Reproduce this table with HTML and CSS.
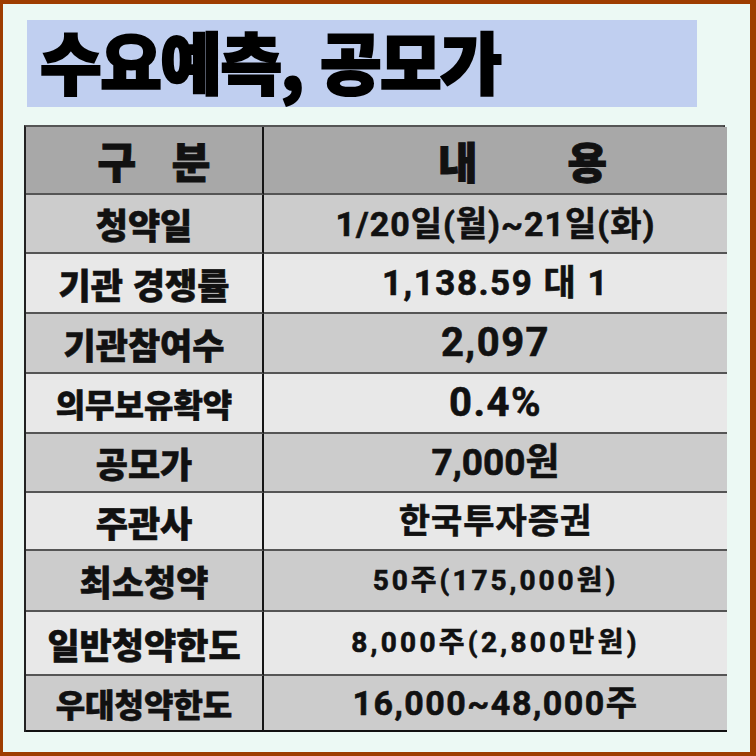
FILE: index.html
```html
<!DOCTYPE html>
<html lang="ko">
<head>
<meta charset="utf-8">
<link rel="stylesheet" href="styles.css">
</head>
<body>
<div class="frame">
  <div class="title"><h1>수요예측, 공모가</h1></div>
  <div class="grid">
    <div class="cell head k h1">구 분</div>
    <div class="cell head v h2">내<span class="gap"></span>용</div>

    <div class="cell dark k">청약일</div>
    <div class="cell dark v s-date">1/20일(월)~21일(화)</div>

    <div class="cell light k">기관 경쟁률</div>
    <div class="cell light v s-ratio">1,138.59 대 1</div>

    <div class="cell dark k">기관참여수</div>
    <div class="cell dark v s-big">2,097</div>

    <div class="cell light k small">의무보유확약</div>
    <div class="cell light v s-big">0.4%</div>

    <div class="cell dark k">공모가</div>
    <div class="cell dark v s-price">7,000원</div>

    <div class="cell light k">주관사</div>
    <div class="cell light v s-mid">한국투자증권</div>

    <div class="cell dark k">최소청약</div>
    <div class="cell dark v s-small">50주(175,000원)</div>

    <div class="cell light k">일반청약한도</div>
    <div class="cell light v s-small wide">8,000주(2,800만원)</div>

    <div class="cell dark k small last">우대청약한도</div>
    <div class="cell dark v s-range last">16,000~48,000주</div>
  </div>
</div>
</body>
</html>
```
FILE: styles.css
```css
html, body {
  margin: 0;
  padding: 0;
}
body {
  width: 756px;
  height: 756px;
  background: #9e3d00;
  font-family: Roboto, "Noto Sans CJK KR", sans-serif;
  color: #111;
}
.frame {
  box-sizing: border-box;
  width: 756px;
  height: 756px;
  border-style: solid;
  border-color: #9e3d00;
  border-width: 4px 6px 4px 3px;
  background: #ecf9f4;
  padding: 16px 0 0 24px;
}
.title {
  width: 670px;
  height: 87px;
  background: #c0cff0;
  display: flex;
  align-items: center;
}
.title h1 {
  margin: -9px 0 0 13px;
  font-family: "Noto Sans CJK KR", sans-serif;
  font-weight: 900;
  font-size: 67px;
  line-height: 1;
  letter-spacing: -1.5px;
  -webkit-text-stroke: 2.2px #000;
  color: #000;
}
.grid {
  margin: 18px 0 0 -3px;
  width: 701px;
  display: grid;
  grid-template-columns: 238px 463px;
  grid-template-rows: 68px 59px 60px 60px 60px 59px 58px 61px 64px 56px;
  border-top: 2px solid #555;
  border-left: 2px solid #222;
  border-right: 2px solid #333;
  box-sizing: border-box;
}
.cell {
  box-sizing: border-box;
  display: flex;
  align-items: center;
  justify-content: center;
  border-bottom: 2px solid #555;
  font-weight: 700;
  line-height: 1;
  white-space: nowrap;
  -webkit-text-stroke: 0.6px #111;
}
.cell.last {
  border-bottom-color: #111;
}
.k {
  border-right: 2px solid #151515;
  font-size: 35px;
  font-weight: 900;
  font-family: "Noto Sans CJK KR", sans-serif;
}
.k.small {
  font-size: 32px;
}
.head {
  background: #a8a8a8;
}
.dark {
  background: #cccccc;
}
.light {
  background: #e8e8e8;
}
.v {
  font-size: 32px;
}
.head.h1 {
  font-size: 42px;
  letter-spacing: 12px;
  padding-left: 32px;
  -webkit-text-stroke: 1px #111;
}
.head.h2 {
  font-size: 43px;
  font-weight: 900;
  font-family: "Noto Sans CJK KR", sans-serif;
  padding-left: 54px;
  -webkit-text-stroke: 1px #111;
}
.gap {
  display: inline-block;
  width: 90px;
}
.s-date {
  font-size: 34px;
  letter-spacing: 1px;
}
.s-ratio {
  font-size: 35px;
  letter-spacing: 1.5px;
}
.s-big {
  font-size: 40px;
  letter-spacing: 1.5px;
}
.s-price {
  font-size: 37px;
}
.s-mid {
  font-size: 34px;
  letter-spacing: 1px;
}
.s-small {
  font-size: 28px;
  letter-spacing: 3px;
}
.s-small.wide {
  letter-spacing: 3.3px;
}
.s-range {
  font-size: 34px;
  letter-spacing: 1.5px;
}
```
